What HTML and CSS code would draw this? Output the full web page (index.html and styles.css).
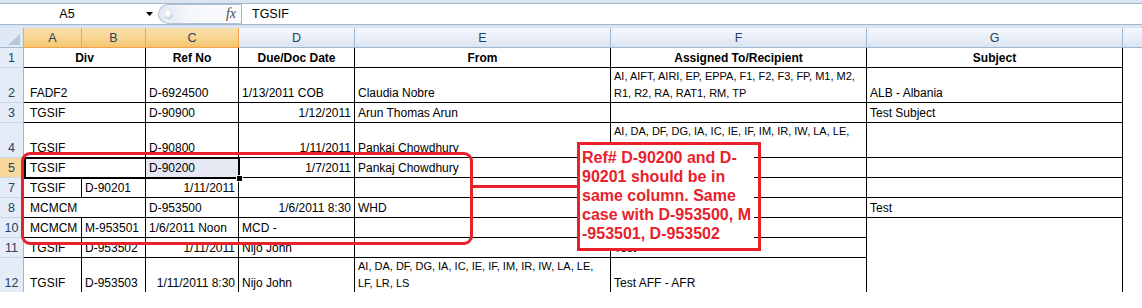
FILE: index.html
```html
<!DOCTYPE html>
<html>
<head>
<meta charset="utf-8">
<link rel="stylesheet" href="styles.css">
</head>
<body>
<div class="app">
  <div class="fbar">
    <div class="fbar-in">
      <div class="namebox">A5</div>
      <div class="ddarrow"><svg width="7" height="4" viewBox="0 0 7 4"><path d="M0 0H7L3.5 4Z" fill="#000"/></svg></div>
      <div class="fxpill"><span class="ball"></span><span class="fx">fx</span></div>
      <div class="ftext">TGSIF</div>
    </div>
  </div>

  <div class="sheet">
    <!-- column headers -->
    <div class="corner"><svg width="24" height="20" viewBox="0 0 24 20"><path d="M20 6V17H8Z" fill="#b7c7db"/></svg></div>
    <div class="ch on">A</div>
    <div class="ch on">B</div>
    <div class="ch on">C</div>
    <div class="ch">D</div>
    <div class="ch">E</div>
    <div class="ch">F</div>
    <div class="ch">G</div>
    <div class="ch last-ch"></div>

    <!-- row 1 -->
    <div class="rh">1</div>
    <div class="c ab ctr b">Div</div>
    <div class="c ctr b">Ref No</div>
    <div class="c ctr b">Due/Doc Date</div>
    <div class="c ctr b">From</div>
    <div class="c ctr b">Assigned To/Recipient</div>
    <div class="c ctr b">Subject</div>
    <div class="h"></div>

    <!-- row 2 -->
    <div class="rh">2</div>
    <div class="c ab a">FADF2</div>
    <div class="c">D-6924500</div>
    <div class="c">1/13/2011 COB</div>
    <div class="c">Claudia Nobre</div>
    <div class="c"><span class="list">AI, AIFT, AIRI, EP, EPPA, F1, F2, F3, FP, M1, M2,<br>R1, R2, RA, RAT1, RM, TP</span></div>
    <div class="c">ALB - Albania</div>
    <div class="h"></div>

    <!-- row 3 -->
    <div class="rh">3</div>
    <div class="c ab a">TGSIF</div>
    <div class="c">D-90900</div>
    <div class="c r">1/12/2011</div>
    <div class="c">Arun Thomas Arun</div>
    <div class="c"></div>
    <div class="c">Test Subject</div>
    <div class="h"></div>

    <!-- row 4 -->
    <div class="rh">4</div>
    <div class="c ab a">TGSIF</div>
    <div class="c">D-90800</div>
    <div class="c r">1/11/2011</div>
    <div class="c">Pankaj Chowdhury</div>
    <div class="c"><span class="list">AI, DA, DF, DG, IA, IC, IE, IF, IM, IR, IW, LA, LE,<br>LF, LR, LS</span></div>
    <div class="c"></div>
    <div class="h"></div>

    <!-- row 5 -->
    <div class="rh on">5</div>
    <div class="c ab a">TGSIF</div>
    <div class="c tint">D-90200</div>
    <div class="c r">1/7/2011</div>
    <div class="c">Pankaj Chowdhury</div>
    <div class="c"></div>
    <div class="c"></div>
    <div class="h"></div>

    <!-- row 7 -->
    <div class="rh">7</div>
    <div class="c a">TGSIF</div>
    <div class="c">D-90201</div>
    <div class="c r">1/11/2011</div>
    <div class="c"></div>
    <div class="c"></div>
    <div class="c"></div>
    <div class="c"></div>
    <div class="h"></div>

    <!-- row 8 -->
    <div class="rh">8</div>
    <div class="c ab a">MCMCM</div>
    <div class="c">D-953500</div>
    <div class="c r">1/6/2011 8:30</div>
    <div class="c">WHD</div>
    <div class="c"></div>
    <div class="c">Test</div>
    <div class="h"></div>

    <!-- row 10 -->
    <div class="rh">10</div>
    <div class="c a">MCMCM</div>
    <div class="c">M-953501</div>
    <div class="c">1/6/2011 Noon</div>
    <div class="c">MCD -</div>
    <div class="c"></div>
    <div class="c"></div>
    <div class="c gmerge"></div>
    <div class="h"></div>

    <!-- row 11 -->
    <div class="rh">11</div>
    <div class="c a">TGSIF</div>
    <div class="c">D-953502</div>
    <div class="c r">1/11/2011</div>
    <div class="c">Nijo John</div>
    <div class="c"></div>
    <div class="c">Test</div>
    <div class="h"></div>

    <!-- row 12 -->
    <div class="rh nb">12</div>
    <div class="c a nb">TGSIF</div>
    <div class="c nb">D-953503</div>
    <div class="c r nb">1/11/2011 8:30</div>
    <div class="c nb">Nijo John</div>
    <div class="c nb"><span class="list">AI, DA, DF, DG, IA, IC, IE, IF, IM, IR, IW, LA, LE,<br>LF, LR, LS</span></div>
    <div class="c nb">Test AFF - AFR</div>
    <div class="h"></div>
  </div>

  <div class="sel"></div>
  <div class="handle"></div>
  <div class="ring"></div>
  <div class="link"></div>
  <div class="note">Ref# D-90200 and D-<br>90201 should be in<br>same column. Same<br>case with D-953500, M<br>-953501, D-953502</div>
</div>
</body>
</html>
```

FILE: styles.css
```css
* { box-sizing: border-box; }

body {
  margin: 0;
  background: #fff;
  font-family: "Liberation Sans", Arial, sans-serif;
  font-size: 12px;
  color: #000;
}

.app {
  position: relative;
  width: 1142px;
  height: 308px;
  overflow: hidden;
  background: #fff;
}

/* formula bar */
.fbar {
  height: 28px;
  padding: 3px 0;
  background: #dbe5f2;
}

.fbar-in {
  height: 22px;
  display: flex;
  align-items: stretch;
  background: #fff;
  border-top: 1px solid #9fb4cd;
  border-bottom: 1px solid #9fb4cd;
}

.namebox {
  width: 134px;
  display: flex;
  align-items: center;
  justify-content: center;
  font-size: 12.5px;
}

.ddarrow {
  width: 24px;
  padding-left: 6px;
  display: flex;
  align-items: center;
  justify-content: center;
}

.fxpill {
  width: 84px;
  display: flex;
  align-items: center;
  border: 1px solid #b2c3d8;
  border-right-color: #9fb4cd;
  border-radius: 10px 0 0 10px;
  background: linear-gradient(to right, #dfe8f4 0%, #f4f7fb 35%, #fbfcfe 100%);
}

.ball {
  width: 9px;
  height: 9px;
  margin-left: 5px;
  border-radius: 50%;
  background: radial-gradient(circle at 40% 35%, #ffffff 0 20%, #c6ccd5 75%, #aab3bf 100%);
}

.fx {
  margin-left: auto;
  margin-right: 5px;
  font-family: "Liberation Serif", serif;
  font-style: italic;
  font-size: 14px;
  color: #4a4a4a;
}

.ftext {
  padding-left: 10px;
  display: flex;
  align-items: center;
  font-size: 12.5px;
}

/* sheet grid */
.sheet {
  display: grid;
  grid-template-columns: 24px 58px 64px 93px 116px 256px 256px 256px 1fr;
  grid-template-rows: 20px 20px 35px 20px 35px 20px 20px 20px 20px 20px 34px;
}

.corner {
  background: #dfe8f4;
  border-right: 1px solid #9eb6ce;
  border-bottom: 1px solid #9eb6ce;
}

.corner svg { display: block; }

.ch {
  display: flex;
  align-items: center;
  justify-content: center;
  color: #27415f;
  font-size: 12.5px;
  background: linear-gradient(to bottom, #f5f8fc 0%, #e9eff8 50%, #dae4f1 100%);
  border-right: 1px solid #9eb6ce;
  border-bottom: 1px solid #9eb6ce;
}

.ch.on {
  background: linear-gradient(to bottom, #fae0ac 0%, #f8d594 50%, #f4c66d 100%);
  border-right-color: #f1a24a;
  border-bottom-color: #f1a24a;
}

.ch.last-ch { border-right: none; }

.rh {
  display: flex;
  align-items: flex-end;
  justify-content: center;
  line-height: 17px;
  color: #27415f;
  font-size: 12.5px;
  background: #e4ecf7;
  border-right: 1px solid #9eb6ce;
  border-bottom: 1px solid #c9d6e7;
}

.rh.on { background: #f9d89e; }

.c {
  display: flex;
  align-items: flex-end;
  padding: 0 3px;
  line-height: 17px;
  white-space: nowrap;
  overflow: hidden;
  border-right: 1px solid #000;
  border-bottom: 1px solid #000;
}

.c.ab { grid-column: span 2; }
.c.a { padding-left: 6px; }
.c.r { justify-content: flex-end; }
.c.ctr { justify-content: center; }
.c.b { font-weight: bold; }
.c.tint { background: #e6e9f4; }
.c.gmerge { grid-row: span 3; border-bottom: none; }
.nb { border-bottom: none; }

.list { font-size: 11px; }

.h { background: #fff; }

/* overlays */
.sel {
  position: absolute;
  left: 24px;
  top: 157px;
  width: 216px;
  height: 22px;
  border: 2px solid #000;
}

.handle {
  position: absolute;
  left: 236px;
  top: 175px;
  width: 7px;
  height: 7px;
  background: #000;
  border: 1px solid #fff;
}

.ring {
  position: absolute;
  left: 21px;
  top: 152px;
  width: 452px;
  height: 93px;
  border: 3px solid #e8212b;
  border-radius: 9px;
}

.link {
  position: absolute;
  left: 471px;
  top: 185px;
  width: 108px;
  height: 3px;
  background: #e8212b;
}

.note {
  position: absolute;
  left: 577px;
  top: 142px;
  width: 184px;
  height: 109px;
  padding: 3px 0 0 2px;
  border: 3px solid #e8212b;
  background: linear-gradient(to right, #fff calc(100% - 4px), transparent calc(100% - 4px));
  color: #e8212b;
  font-family: "Liberation Sans", Arial, sans-serif;
  font-weight: bold;
  font-size: 16px;
  line-height: 19px;
  white-space: nowrap;
}
```
